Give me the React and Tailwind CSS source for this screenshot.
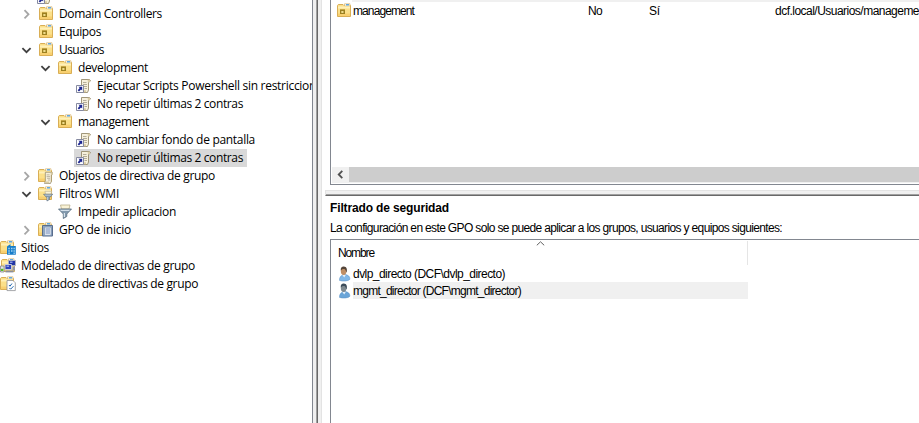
import { useLayoutEffect, useRef } from "react";

// Text whose letter spacing is computed so that it spans a fixed width.
function Fit({ children, w, className = "" }) {
  const ref = useRef(null);
  useLayoutEffect(() => {
    const el = ref.current;
    el.style.letterSpacing = "0px";
    const natural = el.getBoundingClientRect().width;
    el.style.letterSpacing = `${(w - natural) / children.length}px`;
  }, [w, children]);
  return (
    <span ref={ref} className={`whitespace-pre shrink-0 ${className}`}>
      {children}
    </span>
  );
}

function FolderBase() {
  return (
    <>
      <path d="M1.5 2.5 L2.3 1.5 H7 L8 2.5 H14.5 V13.5 H1.5 Z" fill="#fbe08a" stroke="#d9ae55" />
      <path d="M8.5 .8 H14 V3 H8.5 Z" fill="#fff" stroke="#d9b46a" strokeWidth=".7" />
      <path d="M10 1.2 H13 V2.4 H10 Z" fill="#3f97dc" />
      <path d="M2 3.5 H14 V5.5 H2 Z" fill="#fff0b8" />
      <path d="M2 10.5 H14 V13 H2 Z" fill="#f8d070" />
    </>
  );
}

const Svg = ({ children }) => (
  <svg className="h-4 w-4 shrink-0" viewBox="0 0 16 16">
    {children}
  </svg>
);

function Unit() {
  return (
    <Svg>
      <FolderBase />
      <path d="M4 6 H9 V11 H4 Z" fill="#9c8020" />
      <path d="M5.3 8 H7.5 V10 H5.3 Z" fill="#f0dc8c" />
      <path d="M4 6 H9 V7 H4 Z" fill="#c4a548" />
    </Svg>
  );
}

function Scroll() {
  return (
    <>
      <path d="M5.5 1.5 H13.5 L14.5 3 L12.5 4.5 V12 L11.5 14.5 H4.5 L5.5 12 Z" fill="#f6f0dc" stroke="#958a6c" strokeWidth=".9" />
      <path d="M11.5 1.8 H14 V4 H12 Z" fill="#d9cba3" />
      <path d="M5.5 12.2 H10 V14.2 H5 Z" fill="#d9cba3" />
      <path d="M7 4.5 H10.5 M7 6.5 H11 M7.5 8.5 H11 M8.5 10.5 H11" stroke="#a39c88" strokeWidth=".8" />
    </>
  );
}

function Link() {
  return (
    <svg className="h-4 w-4 shrink-0" viewBox="0 0 16 16">
      <Scroll />
      <path d="M.5 7.5 H7.5 V14.5 H.5 Z" fill="#fff" stroke="#8589a0" />
      <path d="M2.4 8.8 H6.2 V12.6 L5 11.4 L3 13.5 L1.7 12.3 L3.7 10.1 Z" fill="#1b2590" />
    </svg>
  );
}

function Gpos() {
  return (
    <svg className="-ml-px mr-px h-4 w-4 shrink-0" viewBox="0 0 16 16">
      <FolderBase />
      <g transform="translate(3.6 3) scale(.86)">
        <Scroll />
      </g>
    </svg>
  );
}

function Funnel() {
  return (
    <>
      <path d="M3.5 1 H13 L12 5 H4.5 Z" fill="#faf3d6" stroke="#b8ad8c" strokeWidth=".8" />
      <path d="M1.5 5 H14.5 L9.8 10 V12.5 L6.3 14.5 V10 Z" fill="#8299ad" stroke="#5a6e80" strokeWidth=".8" />
      <path d="M3 5.7 H13 L12 6.9 H4 Z" fill="#d4e0ea" />
      <path d="M7.4 9 V13" stroke="#dce6ee" strokeWidth="1.2" />
    </>
  );
}

function Wmi() {
  return (
    <svg className="-ml-px mr-px h-4 w-4 shrink-0" viewBox="0 0 16 16">
      <FolderBase />
      <g transform="translate(5.4 4.6) scale(.72)">
        <Funnel />
      </g>
    </svg>
  );
}

const Filter = () => (
  <Svg>
    <Funnel />
  </Svg>
);

function Starter() {
  return (
    <svg className="-ml-px mr-px h-4 w-4 shrink-0" viewBox="0 0 16 16">
      <FolderBase />
      <path d="M5.5 3.5 H15.5 V14 H5.5 Z" fill="#8fa6c2" stroke="#596d8c" />
      <path d="M7.5 5.2 H14 V13.2 H7.5 Z" fill="#f4f8fc" stroke="#7188a8" strokeWidth=".6" />
      <path d="M8.5 7 H13 M8.5 9 H13 M8.5 11 H13" stroke="#5572aa" strokeWidth=".9" />
    </svg>
  );
}

function Sites() {
  return (
    <svg className="h-4 w-4 shrink-0" viewBox="1 0 16 16">
      <FolderBase />
      <path d="M8 6.5 L11.5 4 V6 H16.8 V14.8 H8 Z" fill="#187dc9" />
      <path d="M9.3 7.8 H10.8 V9.3 H9.3 Z M12 7.8 H13.5 V9.3 H12 Z M14.5 7.8 H15.8 V9.3 H14.5 Z M9.3 10.2 H10.8 V11.7 H9.3 Z M12 10.2 H13.5 V11.7 H12 Z M14.5 10.2 H15.8 V11.7 H14.5 Z M9.3 12.5 H10.8 V14 H9.3 Z M14.5 12.5 H15.8 V14 H14.5 Z" fill="#9fd2f2" />
    </svg>
  );
}

function Modeling() {
  return (
    <Svg>
      <FolderBase />
      <path d="M8.5 2.5 H15.5 V7.5 H8.5 Z" fill="#2236a4" stroke="#aeb3c2" />
      <path d="M5 6.5 H11.5 V11.5 H5 Z" fill="#2c41b8" stroke="#c7cbd6" />
      <path d="M6.5 7.5 H9 V9 H6.5 Z M10 3.5 H12.5 V5 H10 Z" fill="#8e9ee8" />
      <path d="M5.5 12.5 H13.5 V14.4 H5.5 Z" fill="#8b8f9b" />
      <path d="M12.5 8.5 H15 V12.5 H12.5 Z" fill="#9297a5" />
      <path d="M.5 8 H4 V14 H.5 Z" fill="#e2e4e8" stroke="#83868e" strokeWidth=".8" />
      <path d="M1 10.8 H3.3 V13 H1 Z" fill="#54c01e" />
    </Svg>
  );
}

function Results() {
  return (
    <svg className="h-4 w-4 shrink-0" viewBox="1 0 16 16">
      <FolderBase />
      <path d="M8 4.5 H14 L16.3 6.8 V14.6 H8 Z" fill="#fff" stroke="#8f9196" strokeWidth=".8" />
      <path d="M10 9 L11 10.2 L13 7.5 M10.5 12 L11.6 13.2 L14.5 10.2" fill="none" stroke="#2468b0" strokeWidth="1" />
    </svg>
  );
}

function User({ dim }) {
  return (
    <svg className="ml-px h-4 w-[15px] shrink-0" viewBox="1 0 15 16">
      <path d="M2.5 14.4 C2.2 11 4.5 8.8 7.5 8.6 C10.8 8.6 13.2 10.6 12.8 13.4 C11 15.2 5.5 15.6 2.5 14.4 Z" fill={dim ? "#6aa5d8" : "#82b8e8"} stroke="#5a90c4" strokeWidth=".5" />
      <path d="M5.3 9 L7.2 11.6 L8.8 8.9 Z" fill="#e7f1fa" />
      <ellipse cx="6.6" cy="5" rx="2.8" ry="3.9" fill={dim ? "#7f8a90" : "#c08e64"} />
      <path d="M3.8 4.6 C3.3 1.5 5 .5 6.8 .6 C9.6 .7 10.4 3 9.6 6.6 C8.9 6 9 4.2 7.8 3.2 C6 2.8 4.6 3.4 3.8 4.6 Z" fill={dim ? "#3c4c5a" : "#54453a"} />
    </svg>
  );
}

function Chevron({ open }) {
  return (
    <svg className="-ml-px h-4 w-4 shrink-0" viewBox="0 0 16 16" fill="none">
      {open ? (
        <path d="M4.4 6.2 L8.5 10.2 L12.6 6.2" stroke="#404040" strokeWidth="1.8" />
      ) : (
        <path d="M6.5 4.2 L10.5 8.3 L6.5 12.4" stroke="#a6a6a6" strokeWidth="1.8" />
      )}
    </svg>
  );
}

const PAD = ["pl-0", "pl-[19px]", "pl-[38px]", "pl-[57px]"];

const TREE = [
  { d: 1, c: "shut", icon: Unit, t: "Domain Controllers", w: 103 },
  { d: 1, icon: Unit, t: "Equipos", w: 42 },
  { d: 1, c: "open", icon: Unit, t: "Usuarios", w: 45 },
  { d: 2, c: "open", icon: Unit, t: "development", w: 70 },
  { d: 3, icon: Link, t: "Ejecutar Scripts Powershell sin restricciones", w: 231 },
  { d: 3, icon: Link, t: "No repetir últimas 2 contras", w: 146 },
  { d: 2, c: "open", icon: Unit, t: "management", w: 71 },
  { d: 3, icon: Link, t: "No cambiar fondo de pantalla", w: 158 },
  { d: 3, icon: Link, t: "No repetir últimas 2 contras", w: 146, sel: true },
  { d: 1, c: "shut", icon: Gpos, t: "Objetos de directiva de grupo", w: 156 },
  { d: 1, c: "open", icon: Wmi, t: "Filtros WMI", w: 60 },
  { d: 2, icon: Filter, t: "Impedir aplicacion", w: 98 },
  { d: 1, c: "shut", icon: Starter, t: "GPO de inicio", w: 72 },
  { d: 0, icon: Sites, t: "Sitios", w: 28 },
  { d: 0, icon: Modeling, t: "Modelado de directivas de grupo", w: 174 },
  { d: 0, icon: Results, t: "Resultados de directivas de grupo", w: 177 },
];

function Row({ d, c, icon: Icon, t, w, sel }) {
  return (
    <div className={`flex h-[18px] items-center ${PAD[d]}`}>
      {d > 0 && <span className="flex w-[19px] shrink-0">{c && <Chevron open={c === "open"} />}</span>}
      <div className={`flex h-[18px] items-center ${d > 0 ? "-ml-0.5 pl-0.5" : ""} ${sel ? "bg-[#d9d9d9] pr-[4px]" : ""}`}>
        <Icon />
        <Fit w={w} className="ml-[5px] leading-[18px]">
          {t}
        </Fit>
      </div>
    </div>
  );
}

function UserRow({ t, w, sel }) {
  return (
    <div className="flex h-[17px] items-center pl-[6px]">
      <User dim={sel} />
      <div className={`flex h-[17px] w-[395px] items-center pt-px ${sel ? "bg-[#f0f0f0]" : ""}`}>
        <Fit w={w}>{t}</Fit>
      </div>
    </div>
  );
}

export default function App() {
  return (
    <div className="flex h-[423px] w-[919px] overflow-hidden bg-white text-black">
      <div className="w-[312px] shrink-0 overflow-hidden font-['Open_Sans','Noto_Sans',sans-serif] text-[12px]">
        <div className="flex h-[5px] items-end pl-[37px]">
          <div className="flex h-[5px] flex-col justify-end overflow-hidden">
            <Link />
          </div>
        </div>
        {TREE.map((r, i) => (
          <Row key={i} {...r} />
        ))}
      </div>
      <div className="flex w-[10px] shrink-0 border-l border-[#828790]">
        <div className="w-[3px] bg-[#f0f0f0]" />
        <div className="w-px bg-[#a0a0a0]" />
        <div className="w-px bg-[#696969]" />
        <div className="w-[3px] bg-[#f0f0f0]" />
        <div className="w-px bg-[#e3e3e3]" />
      </div>
      <div className="flex min-w-0 flex-1 flex-col overflow-hidden font-['Liberation_Sans',Arial,sans-serif] text-[12px]">
        <div className="ml-2 h-[185px] shrink-0 border-b border-l border-[#828790]">
          <div className="ml-[21px] h-0.5 bg-[#f0f0f0]" />
          <div className="flex h-[17px] items-center pl-[5px]">
            <Unit />
            <Fit w={61} className="ml-px pt-px">management</Fit>
            <Fit w={14} className="ml-[174px] pt-px">No</Fit>
            <Fit w={11} className="ml-[47px] pt-px">Sí</Fit>
            <Fit w={153} className="ml-[115px] pt-px">dcf.local/Usuarios/management</Fit>
          </div>
          <div className="mt-[148px] ml-px flex h-[15px]">
            <div className="flex w-[17px] items-center justify-center bg-[#f0f0f0]">
              <svg className="h-[9px] w-[7px]" viewBox="0 0 7 9" fill="none">
                <path d="M5.3 .8 L1.7 4.5 L5.3 8.2" stroke="#505050" strokeWidth="1.8" />
              </svg>
            </div>
            <div className="flex-1 bg-[#cdcdcd]" />
          </div>
          <div className="ml-px h-px bg-[#f0f0f0]" />
        </div>
        <div className="mt-[5px] ml-[3px] h-[6px] shrink-0 border-t border-b border-l border-t-[#e3e3e3] border-b-[#696969] border-l-[#e3e3e3] bg-[#f0f0f0] pt-[3px]">
          <div className="h-px bg-[#a0a0a0]" />
        </div>
        <div className="ml-2 flex h-[43px] shrink-0 flex-col pt-[2px]">
          <div className="flex h-5 items-center">
            <Fit w={119} className="font-bold">Filtrado de seguridad</Fit>
          </div>
          <div className="flex h-[19px] items-center">
            <Fit w={452}>La configuración en este GPO solo se puede aplicar a los grupos, usuarios y equipos siguientes:</Fit>
          </div>
        </div>
        <div className="ml-2 flex-1 border-t border-l border-[#828790]">
          <div className="mt-px flex h-6 w-[417px] border-r border-[#e5e5e5]">
            <div className="flex w-[205px] items-center pl-[7px]">
              <Fit w={36}>Nombre</Fit>
            </div>
            <svg className="h-[5px] w-[9px]" viewBox="0 0 9 5" fill="none">
              <path d="M.8 4.3 L4.5 .8 L8.2 4.3" stroke="#606060" />
            </svg>
          </div>
          <UserRow t="dvlp_directo (DCF\dvlp_directo)" w={152} />
          <UserRow t="mgmt_director (DCF\mgmt_director)" w={168} sel />
        </div>
      </div>
    </div>
  );
}
